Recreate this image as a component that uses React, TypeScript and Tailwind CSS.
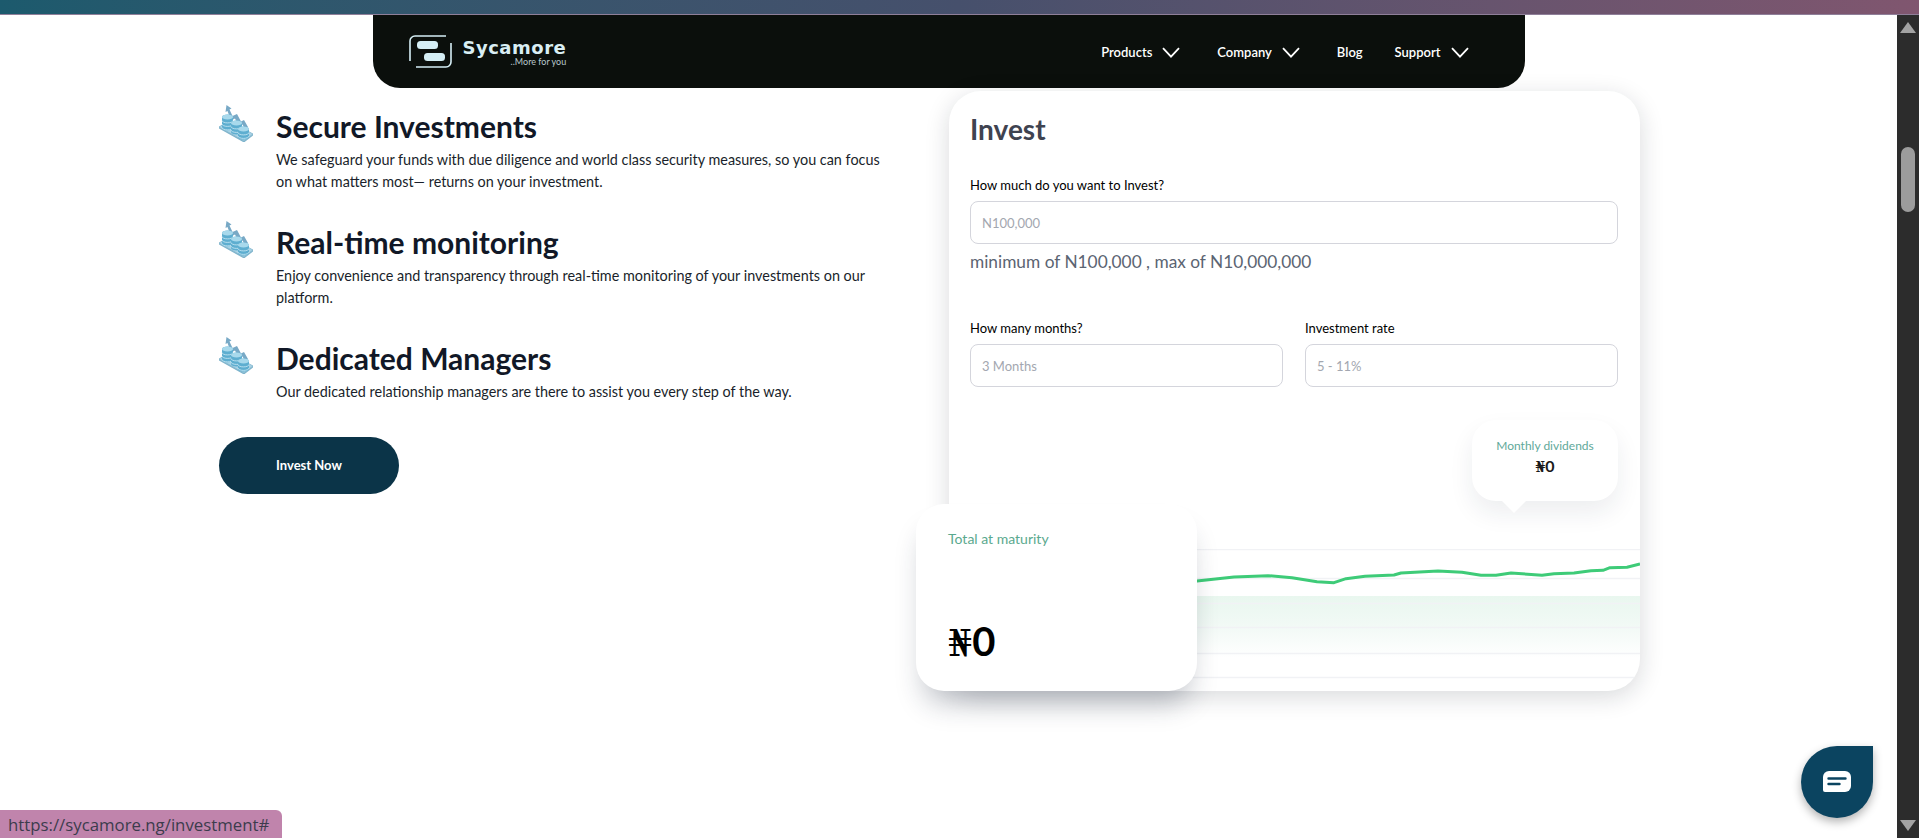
import React from 'react';

const features = [
  {
    title: 'Secure Investments',
    body: (
      <>
        We safeguard your funds with due diligence and world class security measures, so you can focus
        <br />
        on what matters most— returns on your investment.
      </>
    ),
  },
  {
    title: 'Real-time monitoring',
    body: (
      <>
        Enjoy convenience and transparency through real-time monitoring of your investments on our
        <br />
        platform.
      </>
    ),
  },
  {
    title: 'Dedicated Managers',
    body: <>Our dedicated relationship managers are there to assist you every step of the way.</>,
  },
];

const navItems = [
  { label: 'Products', caret: true, cls: '' },
  { label: 'Company', caret: true, cls: '' },
  { label: 'Blog', caret: false, cls: '' },
  { label: 'Support', caret: true, cls: '-ml-[5px]' },
];

const linePoints =
  '0,36 248,32 285,28 319,26.7 343,28.7 368,32.7 385,33.7 397,29.7 416,27.3 445,26 452,24 489,22 513,23.3 532,26.3 547,26.3 562,24 593,26.3 605,24.7 625,24 642,21.7 654,21.3 661,18.7 678,18.3 691,15';

const Caret = () => (
  <svg width="18" height="11" viewBox="0 0 18 11" fill="none" className="shrink-0">
    <path d="M1 1.2 9 9.6 17 1.2" stroke="white" strokeWidth="1.8" />
  </svg>
);

const Logo = () => (
  <div className="flex items-center gap-[11px]">
    <svg width="43" height="33" viewBox="0 0 43 33" fill="none">
      <path d="M1 26V6a5 5 0 0 1 5-5h31" stroke="#d5eef5" strokeWidth="1.6" />
      <path d="M42 8v19a5 5 0 0 1-5 5H7" stroke="#d5eef5" strokeWidth="1.6" />
      <rect x="8" y="6" width="21" height="8" rx="3.5" fill="#d5eef5" />
      <rect x="15" y="18" width="21" height="8" rx="3.5" fill="#d5eef5" />
    </svg>
    <div className="flex flex-col items-end leading-none text-[#d9eef4]">
      <span className="font-['DejaVu_Sans',sans-serif] text-[18px] font-bold leading-[19px] tracking-[0.5px]">Sycamore</span>
      <span className="text-[9px] leading-[9px] text-[#b9c8cc]">..More for you</span>
    </div>
  </div>
);

const Stack = ({ x, y, h }: { x: number; y: number; h: number }) => (
  <g>
    <path
      d={`M${x} ${y + 2}a5.5 2.5 0 0 1 11 0v${h}a5.5 2.5 0 0 1-11 0Z`}
      fill="#5eaed0"
    />
    <ellipse cx={x + 5.5} cy={y + 2} rx="5.5" ry="2.4" fill="#a8d9ec" />
    {Array.from({ length: Math.floor(h / 3.5) }).map((_, i) => (
      <path
        key={i}
        d={`M${x} ${y + 5.5 + i * 3.5}a5.5 2.4 0 0 0 11 0`}
        fill="none"
        stroke="#cdeaf5"
        strokeWidth="0.8"
      />
    ))}
  </g>
);

const Coins = () => (
  <svg width="36" height="37" viewBox="0 0 36 37" className="shrink-0">
    <path d="M0 22 10 16 34 29 25 36Z" fill="#a9d3e6" stroke="#7fb4cc" strokeWidth="0.8" />
    <path d="M0 22v1.5L25 37.5 34 30.5V29L25 36Z" fill="#7fb4cc" />
    <path
      d="M7.5 0 12.5 3.5 10.5 4.5 13.5 11 18 9 22 16.5 25 15 29 22 25.5 23 23.5 19.5 20 21.5 16 13.5 12 15.5 8.5 6 6.5 7Z"
      fill="#78a9c6"
    />
    <Stack x={3} y={10} h={11} />
    <Stack x={12} y={16} h={9} />
    <Stack x={19} y={22} h={8} />
  </svg>
);

const Field = ({ label, placeholder }: { label: string; placeholder: string }) => (
  <label className="flex flex-col flex-1 min-w-0">
    <span className="text-[13px] leading-[20px] text-black font-normal">{label}</span>
    <input
      placeholder={placeholder}
      className="mt-[6px] h-[43px] w-full rounded-[8px] border border-[#d4d5dc] bg-white px-[11px] text-[13px] outline-none placeholder:text-[#a3a7b0]"
    />
  </label>
);

const Chart = () => (
  <svg viewBox="0 0 691 142" width="691" height="142" className="block mt-auto">
    <defs>
      <linearGradient id="band" x1="0" y1="0" x2="0" y2="1">
        <stop offset="0" stopColor="#e9f7ef" />
        <stop offset="0.45" stopColor="#f1f9f5" />
        <stop offset="1" stopColor="#ffffff" />
      </linearGradient>
    </defs>
    <rect x="0" y="47" width="691" height="62" fill="url(#band)" />
    {[0.5, 29.5, 54.5, 78.5, 104.5, 128.5].map((y) => (
      <line key={y} x1="0" x2="691" y1={y} y2={y} stroke="#f1f2f5" strokeWidth="1.5" />
    ))}
    <polyline points={linePoints} fill="none" stroke="#3ecb78" strokeWidth="3" strokeLinejoin="round" />
  </svg>
);

export default function App() {
  return (
    <div className="relative flex h-screen w-full flex-col overflow-hidden bg-white font-['Lato',sans-serif]">
      <div className="h-[15px] shrink-0 border-b border-[#8f7f99] bg-gradient-to-r from-[#1c5a6d] via-[#46506c] to-[#80566f]" />

      <div className="flex min-h-0 flex-1">
        <main className="min-w-0 flex-1">
          <nav className="mx-auto flex h-[73px] w-[1152px] items-center justify-between rounded-b-[27px] bg-[#0b0f0c] pl-[36px] pr-[56px]">
            <Logo />
            <ul className="flex items-center gap-[37px] pt-[2px] text-[13px] font-semibold text-white">
              {navItems.map((item) => (
                <li key={item.label} className={`flex items-center gap-[10px] ${item.cls}`}>
                  {item.label}
                  {item.caret && <Caret />}
                </li>
              ))}
            </ul>
          </nav>

          <div className="flex items-start pl-[219px] pt-[3px]">
            <section className="w-[697px] shrink-0 pt-[14px]">
              <div className="flex flex-col gap-[28px]">
                {features.map((f) => (
                  <div key={f.title} className="flex gap-[21px]">
                    <Coins />
                    <div className="pt-[1px]">
                      <h2 className="text-[30px] font-bold leading-[40px] text-[#111827]">{f.title}</h2>
                      <p className="mt-[3px] text-[14.4px] leading-[22px] text-[#1a1f2b]">{f.body}</p>
                    </div>
                  </div>
                ))}
              </div>
              <button className="mt-[34px] h-[57px] w-[180px] rounded-full bg-[#0b3448] text-[13px] font-bold text-white">
                Invest Now
              </button>
            </section>

            <section className="relative ml-[33px] flex h-[600px] w-[691px] shrink-0 flex-col rounded-[32px] bg-white shadow-[0_6px_24px_rgba(20,25,40,0.16)]">
              <span className="absolute -top-[3px] left-[383px] -z-10 h-[6px] w-[30px] rounded-b-[8px] bg-[#3f6a92]" />
              <div className="flex flex-col pl-[21px] pr-[22px] pt-[20px]">
                <h1 className="text-[28px] font-bold leading-[36px] text-[#3f4350]">Invest</h1>
                <div className="mt-[28px]">
                  <Field label="How much do you want to Invest?" placeholder="N100,000" />
                </div>
                <p className="mt-[5px] text-[17.3px] leading-[26px] text-[#5b6472]">
                  minimum of N100,000 , max of N10,000,000
                </p>
                <div className="mt-[43px] flex gap-[22px]">
                  <Field label="How many months?" placeholder="3 Months" />
                  <Field label="Investment rate" placeholder="5 - 11%" />
                </div>
              </div>

              <div className="min-h-0 flex-1" />
              <div className="overflow-hidden rounded-b-[32px]">
                <Chart />
              </div>

              <div className="absolute left-[523px] top-[329px] flex h-[81px] w-[146px] flex-col items-center rounded-[24px] bg-white pt-[16px] shadow-[0_12px_24px_rgba(30,40,60,0.08)]">
                <span className="text-[12px] leading-[20px] text-[#5fa99a]">Monthly dividends</span>
                <span className="text-[16px] font-bold leading-[20px] text-[#1a1a1a]">
                  <span className="font-['DejaVu_Serif',serif] text-[14px]">₦</span>0
                </span>
                <span className="absolute -bottom-[12px] left-[30px] h-0 w-0 border-l-[12px] border-r-[12px] border-t-[12px] border-l-transparent border-r-transparent border-t-white" />
              </div>

              <div className="absolute -left-[33px] top-[413px] flex h-[187px] w-[281px] flex-col justify-between rounded-[28px] bg-white pb-[26px] pl-[32px] pt-[25px] shadow-[0_20px_28px_-8px_rgba(30,40,60,0.28)]">
                <span className="text-[14px] leading-[20px] text-[#5aa98e]">Total at maturity</span>
                <span className="text-[40px] font-bold leading-[44px] text-black">
                  <span className="font-['DejaVu_Serif',serif] text-[38px] font-normal">₦</span>0
                </span>
              </div>
            </section>
          </div>
        </main>

        {/* scrollbar */}
        <div className="flex w-[22px] shrink-0 flex-col items-center bg-[#2c2c2c] py-[7px]">
          <span className="h-0 w-0 border-b-[11px] border-l-[8px] border-r-[8px] border-b-[#a3a3a3] border-l-transparent border-r-transparent" />
          <span className="mt-[114px] h-[65px] w-[14px] rounded-full bg-[#9c9c9c]" />
          <span className="mt-auto h-0 w-0 border-l-[8px] border-r-[8px] border-t-[11px] border-l-transparent border-r-transparent border-t-[#a3a3a3]" />
        </div>
      </div>

      {/* chat bubble */}
      <button className="absolute left-[1801px] top-[746px] flex h-[72px] w-[72px] items-center justify-center rounded-full rounded-tr-[8px] bg-[#0b4460] shadow-[0_4px_10px_rgba(0,0,0,0.3)]">
        <svg width="28" height="22" viewBox="0 0 28 22">
          <path d="M6 0h16a6 6 0 0 1 6 6v9a6 6 0 0 1-6 6H2a2 2 0 0 1-2-2V6a6 6 0 0 1 6-6Z" fill="white" />
          <path d="M5.5 7.5h17M5.5 13h11" stroke="#0b4460" strokeWidth="2.4" strokeLinecap="round" />
        </svg>
      </button>

      {/* link preview */}
      <div className="absolute bottom-0 left-0 flex h-[28px] w-[282px] items-center rounded-tr-[6px] bg-[#c084ac] pl-[8px] pt-[2px] font-['Open_Sans',sans-serif] text-[16.8px] text-[#3c3c4c]">
        https://sycamore.ng/investment#
      </div>
    </div>
  );
}
